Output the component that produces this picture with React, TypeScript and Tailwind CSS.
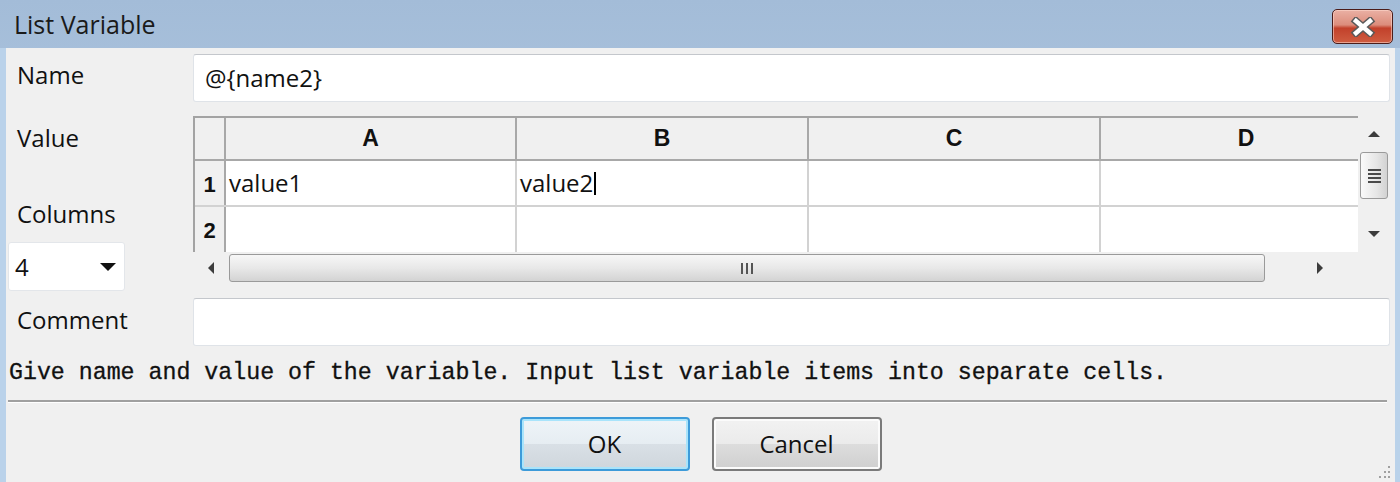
const COLUMNS = ["A", "B", "C", "D"];

const ROWS = [
	{ num: "1", cells: ["value1", "value2", "", ""] },
	{ num: "2", cells: ["", "", "", ""] },
];

function CloseButton() {
	return (
		<div className="mt-[9px] mr-[7px] flex h-[35px] w-[61px] items-center justify-center rounded-[5px] border border-[#4b1d1a] bg-[linear-gradient(to_bottom,#eab0a4_0%,#dc8d7c_45%,#c2412b_55%,#cf5d41_100%)] shadow-[inset_0_0_0_1px_rgba(255,220,210,0.55)]">
			<svg width="26" height="20" viewBox="0 0 26 20">
				<path
					d="M6 4 L20 16 M20 4 L6 16"
					stroke="#5a5a5a"
					strokeWidth="7.5"
					strokeLinecap="square"
				/>
				<path
					d="M6 4 L20 16 M20 4 L6 16"
					stroke="#ffffff"
					strokeWidth="4.5"
					strokeLinecap="square"
				/>
			</svg>
		</div>
	);
}

function Arrow({ dir }: { dir: "up" | "down" | "left" | "right" }) {
	const points = {
		up: "1,7 7,1 13,7",
		down: "1,1 13,1 7,7",
		left: "7,1 7,13 1,7",
		right: "1,1 1,13 7,7",
	}[dir];
	const vertical = dir === "up" || dir === "down";
	return (
		<svg
			width={vertical ? 14 : 8}
			height={vertical ? 8 : 14}
			viewBox={vertical ? "0 0 14 8" : "0 0 8 14"}
		>
			<polygon points={points} fill="#3c3c3c" />
		</svg>
	);
}

function VerticalScroll() {
	return (
		<div className="flex h-[136px] w-[32px] flex-col items-center bg-[#f0f0f0]">
			<div className="flex h-[36px] w-full items-center justify-center">
				<Arrow dir="up" />
			</div>
			<div className="flex h-[47px] w-[28px] flex-col items-center justify-center gap-[2px] rounded-[3px] border border-[#9a9a9a] bg-[linear-gradient(to_right,#fafafa,#e6e6e6_60%,#d2d2d2)]">
				<div className="h-[2px] w-[13px] bg-[#4a4a4a]" />
				<div className="h-[2px] w-[13px] bg-[#4a4a4a]" />
				<div className="h-[2px] w-[13px] bg-[#4a4a4a]" />
				<div className="h-[2px] w-[13px] bg-[#4a4a4a]" />
			</div>
			<div className="flex flex-1 w-full items-end justify-center pb-[14px]">
				<Arrow dir="down" />
			</div>
		</div>
	);
}

function HorizontalScroll() {
	return (
		<div className="flex h-[32px] w-[1165px] items-center bg-[#f0f0f0]">
			<div className="flex w-[36px] items-center justify-center">
				<Arrow dir="left" />
			</div>
			<div className="flex h-[28px] w-[1036px] items-center justify-center gap-[3px] rounded-[3px] border border-[#9a9a9a] bg-[linear-gradient(to_bottom,#f7f7f7,#e8e8e8_50%,#d3d3d3)]">
				<div className="h-[11px] w-[2px] bg-[#555]" />
				<div className="h-[11px] w-[2px] bg-[#555]" />
				<div className="h-[11px] w-[2px] bg-[#555]" />
			</div>
			<div className="flex flex-1 items-center justify-center pl-[16px]">
				<Arrow dir="right" />
			</div>
		</div>
	);
}

function Sheet() {
	return (
		<div className="flex h-[168px] w-[1197px] flex-col">
			<div className="flex h-[136px]">
				<div className="w-[1165px] overflow-hidden border-t-2 border-l-2 border-[#a3a3a3]">
					<div className="flex h-[43px] w-max border-b-2 border-[#a8a8a8] bg-[#f0f0f0] font-['Liberation_Sans',sans-serif] text-[23px] font-bold">
						<div className="w-[31px] border-r-2 border-[#a8a8a8]" />
						{COLUMNS.map((col, i) => (
							<div
								key={col}
								className={`${i === 0 ? "w-[291px]" : "w-[292px]"} flex items-center justify-center border-r-2 border-[#a8a8a8]`}
							>
								{col}
							</div>
						))}
					</div>
					{ROWS.map((row, r) => (
						<div
							key={row.num}
							className={`flex w-max ${r === 0 ? "h-[46px] border-b-2 border-[#d2d2d2]" : "h-[45px]"}`}
						>
							<div className="flex w-[31px] items-center justify-center border-r-2 border-[#a8a8a8] bg-[#f0f0f0] pt-[2px] font-['Liberation_Sans',sans-serif] text-[22px] font-bold">
								{row.num}
							</div>
							{row.cells.map((cell, i) => (
								<div
									key={`${row.num}-${i}`}
									className={`${i === 0 ? "w-[291px]" : "w-[292px]"} flex items-center border-r-2 border-[#d2d2d2] bg-white pl-[3px] text-[24px]`}
								>
									{cell}
									{r === 0 && i === 1 && (
										<span className="ml-[1px] inline-block h-[23px] w-[2px] bg-black" />
									)}
								</div>
							))}
						</div>
					))}
				</div>
				<VerticalScroll />
			</div>
			<div className="flex">
				<HorizontalScroll />
				<div className="h-[32px] w-[32px] bg-[#f0f0f0]" />
			</div>
		</div>
	);
}

function TextBox({ value, height }: { value?: string; height: string }) {
	return (
		<div
			className={`${height} flex w-[1197px] items-center rounded-[3px] border border-[#dfe3e8] border-t-[#c4c7cc] bg-white pl-[11px] text-[24px]`}
		>
			{value}
		</div>
	);
}

function DialogButton({
	label,
	focused,
}: {
	label: string;
	focused?: boolean;
}) {
	return (
		<button
			type="button"
			className={`flex h-[54px] w-[170px] items-center justify-center rounded-[4px] border-2 text-[24px] text-[#111] ${
				focused
					? "border-[#3d9bd9] bg-[linear-gradient(to_bottom,#eef4f8_0%,#e6edf2_50%,#d9e0e6_50%,#cfd6dc_100%)] shadow-[inset_0_0_0_2px_#a9e4fb]"
					: "border-[#7a7a7a] bg-[linear-gradient(to_bottom,#f2f2f2_0%,#ebebeb_50%,#dddddd_50%,#cfcfcf_100%)] shadow-[inset_0_0_0_2px_#fbfbfb]"
			}`}
		>
			{label}
		</button>
	);
}

export default function App() {
	return (
		<div className="flex h-[482px] w-[1400px] flex-col overflow-hidden bg-[linear-gradient(to_bottom,#a3bcd8,#c0d6ec)] font-['Open_Sans',sans-serif] text-[#111]">
			<div className="flex h-[48px] items-start justify-between">
				<div className="pt-[12px] pl-[14px] text-[25px] leading-[25px] text-[#1a1a1a]">
					List Variable
				</div>
				<CloseButton />
			</div>
			<div className="flex flex-1">
				<div className="w-[6px] bg-[#bad2ea]" />
				<div className="relative flex w-[1389px] flex-col bg-[#f0f0f0] pt-[6px]">
					<div className="flex h-[48px]">
						<div className="w-[187px] pt-[9px] pl-[11px] text-[24px] leading-[24px]">
							Name
						</div>
						<TextBox value="@{name2}" height="h-[48px]" />
					</div>

					<div className="mt-[14px] flex h-[175px]">
						<div className="flex w-[187px] flex-col">
							<div className="pt-[10px] pl-[11px] text-[24px] leading-[24px]">
								Value
							</div>
							<div className="mt-[52px] pl-[11px] text-[24px] leading-[24px]">
								Columns
							</div>
							<div className="mt-[16px] ml-[2px] flex h-[49px] w-[117px] items-center justify-between rounded-[3px] border border-[#e3e6ea] bg-white pr-[8px] pl-[6px] text-[24px]">
								<span>4</span>
								<svg width="16" height="8" viewBox="0 0 16 8">
									<polygon points="0,0 16,0 8,8" fill="#111" />
								</svg>
							</div>
						</div>
						<Sheet />
					</div>

					<div className="mt-[7px] flex h-[48px]">
						<div className="w-[187px] pt-[10px] pl-[11px] text-[24px] leading-[24px]">
							Comment
						</div>
						<TextBox height="h-[48px]" />
					</div>

					<div className="mt-[15px] pl-[3px] font-['Liberation_Mono',monospace] text-[23.25px] leading-[24px] whitespace-pre text-[#111] [-webkit-text-stroke:0.3px_#111]">
						Give name and value of the variable. Input list variable items into
						separate cells.
					</div>

					<div className="mt-[15px] mr-[8px] ml-[2px] border-t-2 border-b border-t-[#a0a0a0] border-b-white" />

					<div className="mt-[14px] flex justify-center gap-[22px]">
						<DialogButton label="OK" focused />
						<DialogButton label="Cancel" />
					</div>

					<svg
						className="absolute right-[3px] bottom-[2px]"
						width="16"
						height="16"
						viewBox="0 0 16 16"
					>
						<rect x="12" y="2" width="2" height="2" fill="#a0a0a0" />
						<rect x="8" y="7" width="2" height="2" fill="#a0a0a0" />
						<rect x="12" y="7" width="2" height="2" fill="#a0a0a0" />
						<rect x="3" y="12" width="2" height="2" fill="#a0a0a0" />
						<rect x="8" y="12" width="2" height="2" fill="#a0a0a0" />
						<rect x="12" y="12" width="2" height="2" fill="#a0a0a0" />
					</svg>
				</div>
				<div className="flex-1 bg-[#bad2ea]" />
			</div>
		</div>
	);
}
